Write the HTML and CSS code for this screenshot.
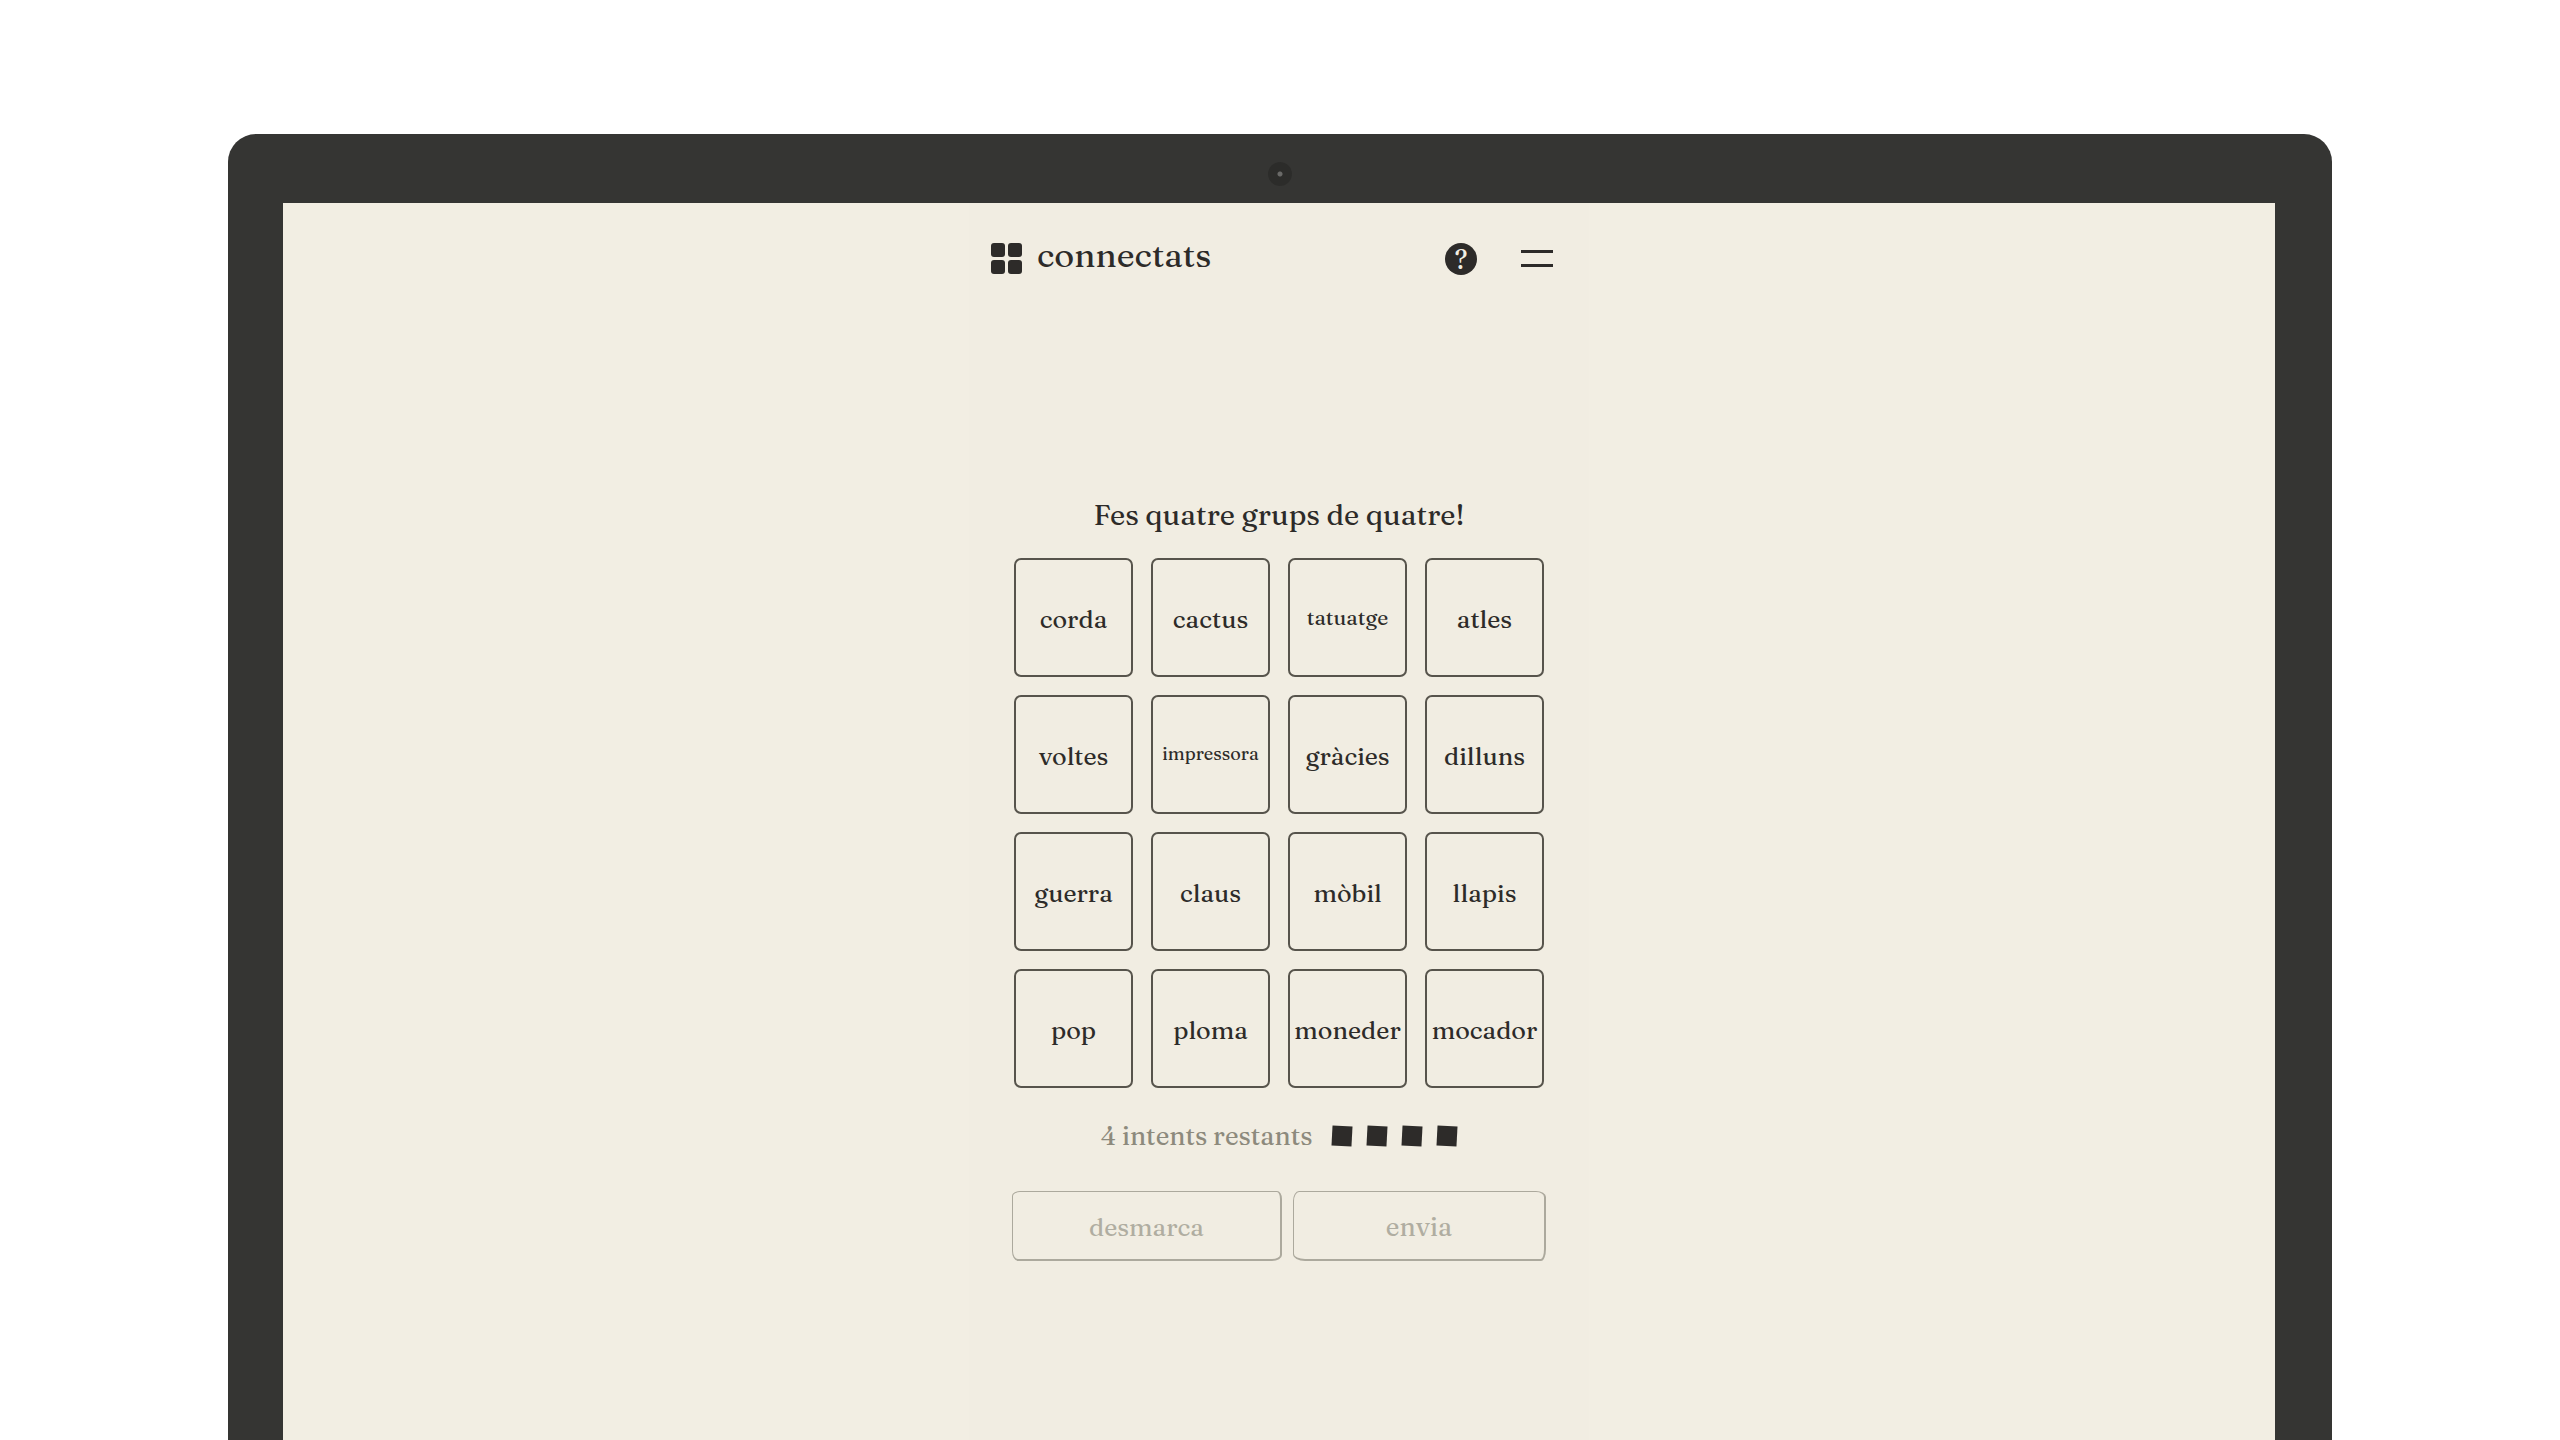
FILE: index.html
```html
<!DOCTYPE html>
<html lang="ca">
<head>
<meta charset="utf-8">
<meta name="viewport" content="width=device-width, initial-scale=1">
<title>connectats</title>
<link rel="stylesheet" href="styles.css">
</head>
<body>
<div class="monitor">
  <div class="bezel"><span class="camera"></span></div>
  <div class="screen">
    <div class="app">
      <header class="header">
        <a class="brand" href="#">
          <svg class="logo" viewBox="0 0 31 31" aria-hidden="true"><rect width="14" height="14" rx="3"/><rect x="17" width="14" height="14" rx="3"/><rect y="17" width="14" height="14" rx="3"/><rect x="17" y="17" width="14" height="14" rx="3"/></svg>
          <span>connectats</span>
        </a>
        <nav class="actions">
          <button class="help" type="button" aria-label="Ajuda">?</button>
          <button class="menu" type="button" aria-label="Menú"><span class="line"></span><span class="line"></span></button>
        </nav>
      </header>
      <main class="game">
        <h1 class="title">Fes quatre grups de quatre!</h1>
        <div class="board">
          <button class="tile" type="button">corda</button>
          <button class="tile" type="button">cactus</button>
          <button class="tile tile-medium" type="button">tatuatge</button>
          <button class="tile" type="button">atles</button>
          <button class="tile" type="button">voltes</button>
          <button class="tile tile-small" type="button">impressora</button>
          <button class="tile" type="button">gràcies</button>
          <button class="tile" type="button">dilluns</button>
          <button class="tile" type="button">guerra</button>
          <button class="tile" type="button">claus</button>
          <button class="tile" type="button">mòbil</button>
          <button class="tile" type="button">llapis</button>
          <button class="tile" type="button">pop</button>
          <button class="tile" type="button">ploma</button>
          <button class="tile" type="button">moneder</button>
          <button class="tile" type="button">mocador</button>
        </div>
        <div class="attempts">
          <span>4 intents restants</span>
          <span class="marks"><i class="mark"></i><i class="mark"></i><i class="mark"></i><i class="mark"></i></span>
        </div>
        <div class="controls">
          <button class="control control-clear" type="button" disabled>desmarca</button>
          <button class="control control-send" type="button" disabled>envia</button>
        </div>
      </main>
    </div>
  </div>
</div>
</body>
</html>
```
FILE: styles.css
```css
* {
  box-sizing: border-box;
}

body {
  margin: 0;
  background: #fff;
  color: #2d2b29;
  font-family: Fraunces, "Liberation Serif", serif;
}

button {
  margin: 0;
  padding: 0;
  border: 0;
  background: none;
  color: inherit;
  font-family: inherit;
}

.monitor {
  display: flex;
  flex-direction: column;
  min-height: calc(100vh - 134px);
  margin: 134px 228px 0;
  padding: 0 57px 0 55px;
  border-radius: 28px 28px 0 0;
  background: #353533;
}

.bezel {
  display: flex;
  align-items: center;
  justify-content: center;
  height: 69px;
  padding: 10px 0 0 2px;
}

.camera {
  width: 24px;
  height: 24px;
  border-radius: 50%;
  background: radial-gradient(circle, #6a6a68 0 2px, #2c2c2a 3px);
}

.screen {
  flex: 1;
  display: flex;
  justify-content: center;
  background: #f2eee3;
}

.app {
  width: 100%;
  max-width: 620px;
  background: #f1ede2;
}

.header {
  display: flex;
  align-items: center;
  justify-content: space-between;
  height: 111px;
  padding: 0 36px 0 22px;
}

.brand {
  display: flex;
  align-items: center;
  gap: 15px;
  color: inherit;
  font-size: 34px;
  line-height: 48px;
  text-decoration: none;
}

.brand span {
  padding-bottom: 8px;
}

.logo {
  width: 31px;
  height: 31px;
  fill: #2d2b29;
}

.actions {
  display: flex;
  align-items: center;
  gap: 44px;
}

.help {
  width: 32px;
  height: 32px;
  border-radius: 50%;
  background: #2d2b29;
  color: #f2eee3;
  font-size: 26px;
  line-height: 32px;
}

.menu {
  display: flex;
  flex-direction: column;
  gap: 11px;
  width: 32px;
}

.line {
  height: 3px;
  background: #2d2b29;
}

.game {
  display: flex;
  flex-direction: column;
  align-items: center;
  padding-top: 181px;
}

.title {
  margin: 0 0 23px;
  font-size: 29px;
  font-weight: 400;
  line-height: 40px;
}

.board {
  display: grid;
  grid-template-columns: repeat(4, 119px);
  grid-auto-rows: 119px;
  gap: 18px;
}

.tile {
  padding-top: 2px;
  border: 2px solid #57544c;
  border-radius: 7px;
  font-size: 25px;
  line-height: 32px;
}

.tile-medium {
  padding-top: 0;
  padding-bottom: 2px;
  font-size: 21px;
}

.tile-small {
  padding-top: 0;
  padding-bottom: 2px;
  font-size: 18px;
}

.attempts {
  display: flex;
  align-items: center;
  gap: 20px;
  margin: 28px 0 35px;
  color: #8d8a7d;
  font-size: 26px;
  line-height: 40px;
}

.marks {
  display: flex;
  gap: 15px;
}

.mark {
  width: 20px;
  height: 20px;
  background: #2d2b29;
  transform: rotate(3deg);
}

.controls {
  display: flex;
  gap: 11px;
  width: 534px;
}

.control {
  height: 70px;
  padding-top: 2px;
  border: 1px solid #aca99d;
  color: #b0ada1;
  font-size: 25px;
  line-height: 40px;
}

.control-clear {
  flex: 270;
  border-width: 1px 2px 2px 1px;
  border-radius: 8px 5px 10px 6px / 5px 8px 6px 10px;
}

.control-send {
  flex: 253;
  border-width: 1px 2px 2px 1px;
  border-radius: 6px 10px 5px 12px / 10px 6px 12px 7px;
  font-size: 26px;
}
```
